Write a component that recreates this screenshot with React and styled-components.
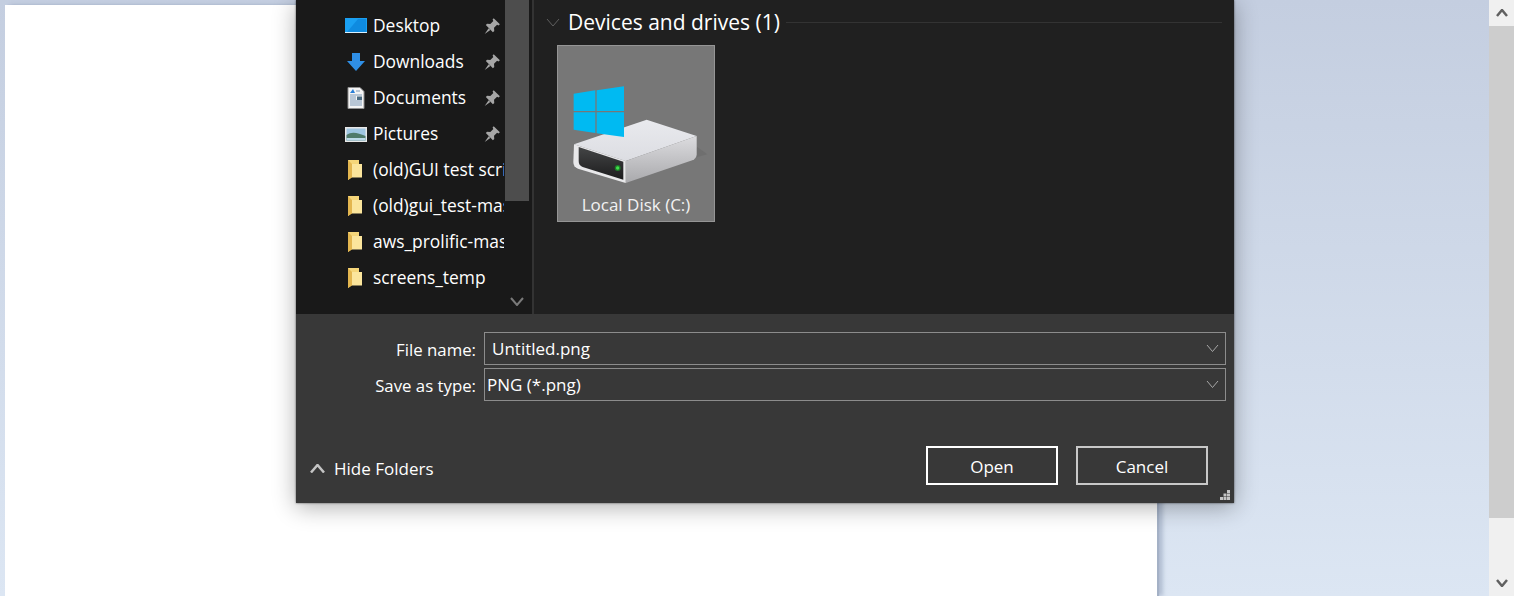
import React from 'react';
import styled, { createGlobalStyle } from 'styled-components';

const GlobalStyle = createGlobalStyle`
  html, body {
    margin: 0;
    height: 100%;
    overflow: hidden;
  }
  * {
    box-sizing: border-box;
  }
`;

const Page = styled.div`
  position: relative;
  display: flex;
  width: 1514px;
  height: 596px;
  overflow: hidden;
  font-family: 'Open Sans', 'Noto Sans', sans-serif;
  background: linear-gradient(180deg, #c4cee0 0%, #dce6f3 100%);
`;

const Desk = styled.div`
  flex: 1;
  padding: 5px 0 0 5px;
`;

const Canvas = styled.div`
  width: 1152px;
  height: 100%;
  background: #fff;
  box-shadow: 2px 0 1px #a4b1c6, 6px 0 4px rgba(120, 135, 165, 0.4);
`;

const ScrollTrack = styled.div`
  display: flex;
  flex-direction: column;
  width: 25px;
  margin-left: 1px;
  background: #f0f0f0;
`;

const ScrollArrow = styled.div`
  display: flex;
  align-items: center;
  justify-content: center;
  height: 26px;
`;

const ScrollThumb = styled.div`
  height: 492px;
  background: #cdcdcd;
`;

const ScrollRest = styled.div`
  flex: 1;
`;

const Dialog = styled.div`
  position: absolute;
  left: 296px;
  top: 0;
  display: flex;
  flex-direction: column;
  width: 938px;
  height: 503px;
  box-shadow: 0 0 2px rgba(0, 0, 0, 0.6), 0 4px 22px rgba(0, 0, 0, 0.32);
`;

const Body = styled.div`
  display: flex;
  height: 314px;
  background: #202020;
`;

const Nav = styled.div`
  position: relative;
  display: flex;
  flex-direction: column;
  width: 236px;
  padding-top: 8px;
  background: #191919;
`;

const NavRow = styled.div`
  display: flex;
  align-items: center;
  height: 36px;
  width: 208px;
  overflow: hidden;
`;

const NavIcon = styled.div`
  display: flex;
  align-items: center;
  justify-content: center;
  flex: none;
  width: 24px;
  height: 24px;
  margin-left: 48px;
`;

const NavLabel = styled.span`
  flex: 1;
  margin-left: 5px;
  padding-bottom: 2px;
  overflow: hidden;
  white-space: nowrap;
  font-size: 17.4px;
  color: #fff;
`;

const Pin = styled.div`
  display: flex;
  flex: none;
  margin: 0 3px 0 4px;
`;

const NavThumb = styled.div`
  position: absolute;
  top: 0;
  left: 209px;
  width: 24px;
  height: 201px;
  background: #4d4d4d;
`;

const NavDown = styled.div`
  position: absolute;
  left: 214px;
  top: 297px;
  display: flex;
`;

const Divider = styled.div`
  flex: none;
  width: 2px;
  background: #333;
`;

const Content = styled.div`
  flex: 1;
  padding: 7px 12px 0 12px;
`;

const GroupHead = styled.div`
  display: flex;
  align-items: center;
  height: 30px;
`;

const GroupChevron = styled.div`
  display: flex;
  flex: none;
  width: 22px;
`;

const GroupTitle = styled.span`
  font-size: 21px;
  color: #fff;
  white-space: nowrap;
`;

const GroupLine = styled.div`
  flex: 1;
  height: 1px;
  margin-left: 6px;
  background: #333;
`;

const Tile = styled.div`
  display: flex;
  flex-direction: column;
  width: 158px;
  height: 177px;
  margin: 8px 0 0 11px;
  border: 1px solid #959595;
  background: #777;
`;

const TileIcon = styled.svg`
  display: block;
  flex: none;
`;

const TileLabel = styled.div`
  padding-top: 3px;
  text-align: center;
  font-size: 17px;
  line-height: 36px;
  color: #f2f2f2;
  white-space: nowrap;
`;

const Footer = styled.div`
  position: relative;
  display: flex;
  flex-direction: column;
  flex: 1;
  padding: 18px 8px 0 0;
  background: #383838;
`;

const FieldRow = styled.div`
  display: flex;
  align-items: center;
  gap: 8px;
  margin-bottom: 3px;
`;

const FieldLabel = styled.label`
  flex: none;
  width: 180px;
  padding-top: 1px;
  text-align: right;
  font-size: 16.8px;
  color: #fff;
`;

const Combo = styled.div`
  display: flex;
  align-items: center;
  flex: 1;
  height: 33px;
  padding-left: ${(p) => (p.$editable ? '7px' : '2px')};
  padding-right: 6px;
  border: 1px solid #8c8c8c;
  font-size: 17px;
  color: #fff;
`;

const ComboText = styled.span`
  flex: 1;
  white-space: nowrap;
`;

const ActionBar = styled.div`
  display: flex;
  align-items: center;
  margin-top: 42px;
  padding: 0 18px 0 14px;
`;

const HideFolders = styled.div`
  display: flex;
  align-items: center;
  gap: 9px;
  margin-top: 6px;
  font-size: 17px;
  color: #fff;
  flex: 1;
`;

const Button = styled.div`
  display: flex;
  align-items: center;
  justify-content: center;
  width: 132px;
  height: 39px;
  margin-left: 18px;
  padding-top: 1px;
  border: 2px solid ${(p) => (p.$primary ? '#fff' : '#c8c8c8')};
  font-size: 17px;
  color: #fff;
`;

const Grip = styled.svg`
  position: absolute;
  right: 3px;
  bottom: 2px;
`;

const DesktopIcon = () => (
  <svg width="24" height="18" viewBox="0 0 24 18">
    <rect x="1" y="1" width="22" height="15" fill="#1aa0f2" />
    <path d="M3 15 L14 2 H22 V15 Z" fill="#0f8be0" />
    <rect x="1" y="15" width="22" height="1" fill="#d9f0ff" />
  </svg>
);

const DownloadIcon = () => (
  <svg width="20" height="20" viewBox="0 0 20 20">
    <path d="M6 1 H14 V9 H19 L10 19 L1 9 H6 Z" fill="#2f8fe6" />
  </svg>
);

const DocumentIcon = () => (
  <svg width="18" height="22" viewBox="0 0 18 22">
    <path d="M1 .5 H13 L17 4.5 V21.5 H1 Z" fill="#f4f4f4" stroke="#8f8f8f" />
    <path d="M3 6 L6 2 L8 6 Z" fill="#2b7fd6" />
    <path d="M9 4 H13 M3 8 H15 M3 10 H9 M3 12 H9 M3 14 H15 M3 16 H15 M3 18 H15" stroke="#7f9ab8" />
    <rect x="10" y="9.500" width="5" height="3.500" fill="#4a6a80" />
  </svg>
);

const PictureIcon = () => (
  <svg width="24" height="17" viewBox="0 0 24 17">
    <rect x="1" y="1" width="22" height="15" fill="#e8e8e8" />
    <rect x="2.500" y="2.500" width="19" height="12" fill="#9fc6e2" />
    <path d="M2.500 9 C8 5 14 7 21.500 10 V14.500 H2.500 Z" fill="#4f7a6a" />
    <path d="M2.500 12 H21.500 V14.500 H2.500 Z" fill="#bcd9e8" />
  </svg>
);

const FolderIcon = () => (
  <svg width="18" height="22" viewBox="0 0 18 22">
    <path d="M1 1 H12 V18 H5 L1 21 Z" fill="#f5d67a" />
    <path d="M5 5 H15 V18.500 H5 Z" fill="#fbe59c" />
    <path d="M1 1 L5 5 V18.500 L1 21 Z" fill="#e3b64f" />
  </svg>
);

const PinIcon = () => (
  <svg width="18" height="18" viewBox="0 0 16 16">
    <path d="M9.500 1 L15 6.500 L13.800 7.500 L12.500 6.800 L9.800 9.500 L10 12.500 L8.800 13.500 L2.500 7.200 L3.600 6 L6.500 6.200 L9.200 3.500 L8.500 2.200 Z" fill="#a6a6a6" />
    <path d="M5 10 L1.500 15 L6.500 11.500 Z" fill="#a6a6a6" />
  </svg>
);

const Chevron = ({ up, size = 14, color = '#8c8c8c', weight = 1 }) => (
  <svg width={size} height={size / 2 + 2} viewBox={`0 0 ${size} ${size / 2 + 2}`}>
    <path
      d={
        up
          ? `M1 ${size / 2 + 1} L${size / 2} 1 L${size - 1} ${size / 2 + 1}`
          : `M1 1 L${size / 2} ${size / 2 + 1} L${size - 1} 1`
      }
      fill="none"
      stroke={color}
      strokeWidth={weight}
    />
  </svg>
);

const DriveIcon = () => (
  <TileIcon width="156" height="138" viewBox="52 137 468 414">
    <defs>
      <linearGradient id="driveTop" x1="0" y1="0" x2="0" y2="1">
        <stop offset="0" stopColor="#e9eaee" />
        <stop offset="1" stopColor="#dcdde2" />
      </linearGradient>
      <linearGradient id="driveFront" x1="0" y1="0" x2="0" y2="1">
        <stop offset="0" stopColor="#dcdcdf" />
        <stop offset="1" stopColor="#a9a9ac" />
      </linearGradient>
      <linearGradient id="drivePanel" x1="0" y1="0" x2="0" y2="1">
        <stop offset="0" stopColor="#444546" />
        <stop offset="1" stopColor="#1c1c1d" />
      </linearGradient>
    </defs>
    <path d="M440 478 L500 462 L470 440 Z" fill="#6f6f6f" />
    <path d="M100 432 L318 358 L468 407 L255 482 Z" fill="url(#driveTop)" />
    <path d="M255 482 L468 407 L468 462 Q468 474 455 480 L255 548 Z" fill="url(#driveFront)" />
    <path d="M100 432 L255 482 L255 548 L112 505 Q98 500 98 485 Z" fill="#e8e8ea" />
    <path d="M114 440 L248 484 L248 538 L126 500 Q114 496 114 482 Z" fill="url(#drivePanel)" />
    <circle cx="231" cy="503" r="9" fill="#1f7a2a" />
    <circle cx="231" cy="503" r="5" fill="#3fe04a" />
    <path d="M99 280 L164 270 V332 H99 Z" fill="#00baf2" />
    <path d="M168 270 L250 258 V332 H168 Z" fill="#00baf2" />
    <path d="M99 336 H164 V398 L99 388 Z" fill="#00baf2" />
    <path d="M168 336 H250 V410 L168 399 Z" fill="#00baf2" />
  </TileIcon>
);

const places = [
  { name: 'Desktop', icon: <DesktopIcon />, pinned: true },
  { name: 'Downloads', icon: <DownloadIcon />, pinned: true },
  { name: 'Documents', icon: <DocumentIcon />, pinned: true },
  { name: 'Pictures', icon: <PictureIcon />, pinned: true },
  { name: '(old)GUI test scripts', icon: <FolderIcon /> },
  { name: '(old)gui_test-master', icon: <FolderIcon /> },
  { name: 'aws_prolific-master', icon: <FolderIcon /> },
  { name: 'screens_temp', icon: <FolderIcon /> },
];

export default function App() {
  return (
    <Page>
      <GlobalStyle />
      <Desk>
        <Canvas />
      </Desk>
      <ScrollTrack>
        <ScrollArrow>
          <Chevron up size={12} color="#606060" weight={2.5} />
        </ScrollArrow>
        <ScrollThumb />
        <ScrollRest />
        <ScrollArrow>
          <Chevron size={12} color="#606060" weight={2.5} />
        </ScrollArrow>
      </ScrollTrack>

      <Dialog>
        <Body>
          <Nav>
            {places.map((place) => (
              <NavRow key={place.name}>
                <NavIcon>{place.icon}</NavIcon>
                <NavLabel>{place.name}</NavLabel>
                {place.pinned && (
                  <Pin>
                    <PinIcon />
                  </Pin>
                )}
              </NavRow>
            ))}
            <NavThumb />
            <NavDown>
              <Chevron size={14} color="#7a7a7a" weight={2} />
            </NavDown>
          </Nav>
          <Divider />
          <Content>
            <GroupHead>
              <GroupChevron>
                <Chevron size={14} color="#5f5f5f" />
              </GroupChevron>
              <GroupTitle>Devices and drives (1)</GroupTitle>
              <GroupLine />
            </GroupHead>
            <Tile>
              <DriveIcon />
              <TileLabel>Local Disk (C:)</TileLabel>
            </Tile>
          </Content>
        </Body>
        <Footer>
          <FieldRow>
            <FieldLabel>File name:</FieldLabel>
            <Combo $editable>
              <ComboText>Untitled.png</ComboText>
              <Chevron size={13} color="#a8a8a8" />
            </Combo>
          </FieldRow>
          <FieldRow>
            <FieldLabel>Save as type:</FieldLabel>
            <Combo>
              <ComboText>PNG (*.png)</ComboText>
              <Chevron size={13} color="#a8a8a8" />
            </Combo>
          </FieldRow>
          <ActionBar>
            <HideFolders>
              <Chevron up size={15} color="#c4c4c4" weight={2.5} />
              Hide Folders
            </HideFolders>
            <Button $primary>Open</Button>
            <Button>Cancel</Button>
          </ActionBar>
          <Grip width="11" height="11" viewBox="0 0 11 11" fill="#c4c4c4">
            <rect x="7" y="0" width="3" height="3" />
            <rect x="3.500" y="3.500" width="3" height="3" />
            <rect x="7" y="3.500" width="3" height="3" />
            <rect x="0" y="7" width="3" height="3" />
            <rect x="3.500" y="7" width="3" height="3" />
            <rect x="7" y="7" width="3" height="3" />
          </Grip>
        </Footer>
      </Dialog>
    </Page>
  );
}
